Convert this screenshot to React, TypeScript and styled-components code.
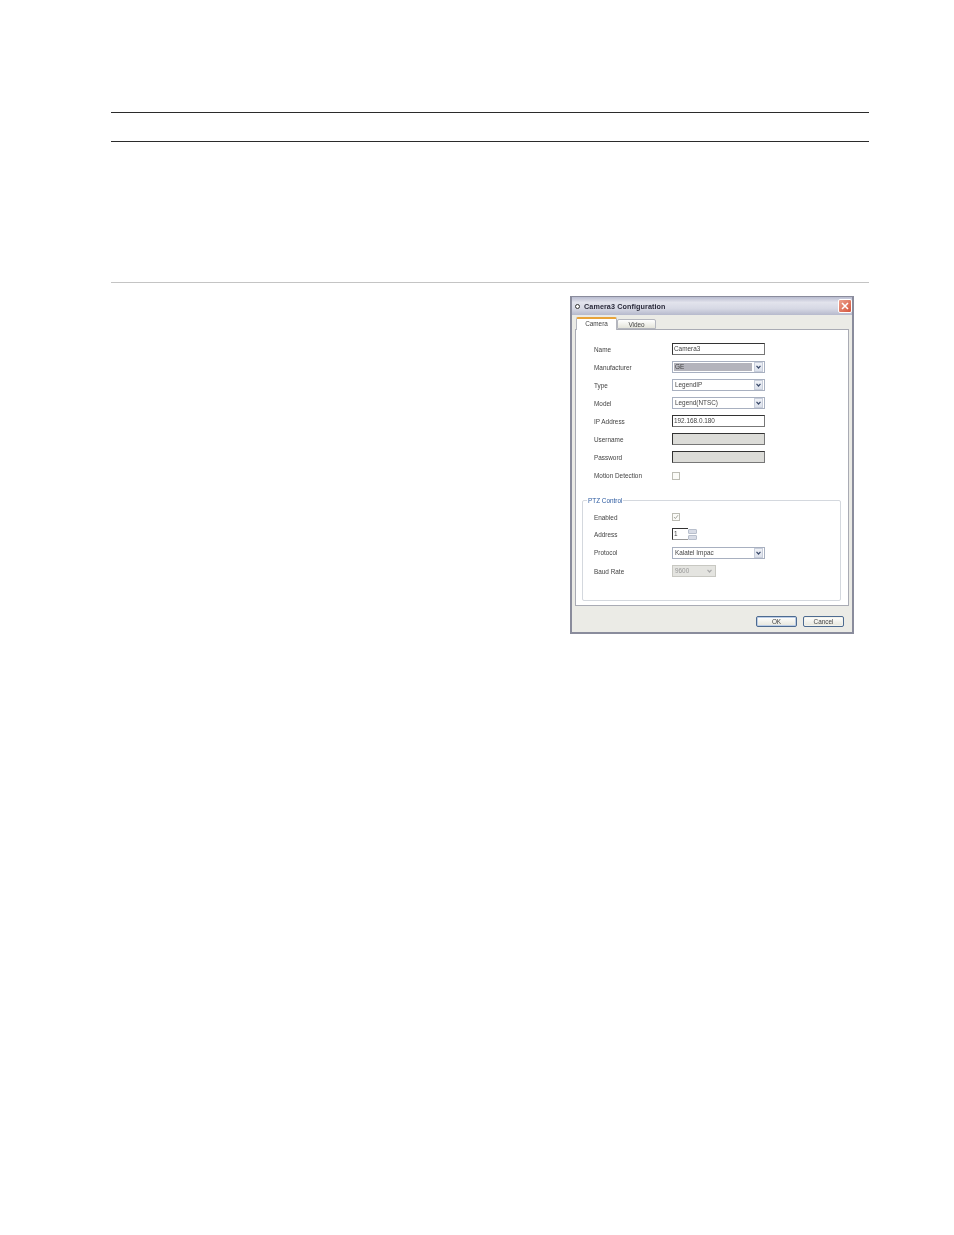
import React from 'react'
import styled, { createGlobalStyle } from 'styled-components'

const GlobalStyle = createGlobalStyle`
  html, body {
    margin: 0;
    background: #fff;
    font-family: "Liberation Sans", Arial, sans-serif;
  }
`

const Page = styled.div`
  width: 954px;
  height: 1235px;
  box-sizing: border-box;
  padding: 112px 85px 0 111px;
  display: flex;
  flex-direction: column;
`

const HeaderBand = styled.div`
  height: 28px;
  border-top: 1px solid #2b2b2b;
  border-bottom: 1px solid #2b2b2b;
`

const IntroSpace = styled.div`
  height: 140px;
  border-bottom: 1px solid #c4c4c4;
`

const Figure = styled.div`
  display: flex;
  justify-content: flex-end;
  padding: 13px 15px 0 0;
`

const Dialog = styled.div`
  width: 284px;
  height: 338px;
  box-sizing: border-box;
  background: #ebebe6;
  border: 2px solid #8a8c9c;
  border-top-width: 1px;
  display: flex;
  flex-direction: column;
  filter: blur(0.3px);
`

const TitleBar = styled.div`
  height: 18px;
  flex: none;
  display: flex;
  align-items: center;
  padding: 0 0 0 3px;
  background: linear-gradient(#b9bcd0 0%, #e2e3ec 30%, #d6d8e4 65%, #b6b9cc 100%);
`

const TitleIcon = styled.span`
  width: 3px;
  height: 3px;
  margin-right: 4px;
  border: 1px solid #333;
  border-radius: 50%;
  background: #fff;
`

const TitleText = styled.span`
  flex: 1;
  font-size: 7.2px;
  font-weight: 700;
  letter-spacing: 0.1px;
  color: #2a2a3a;
`

const CloseButton = styled.span`
  width: 14px;
  height: 14px;
  border-radius: 2px;
  background: linear-gradient(135deg, #eda08c, #d4553c);
  border: 1px solid #fff;
  box-sizing: border-box;
  display: flex;
  align-items: center;
  justify-content: center;
`

const Body = styled.div`
  flex: 1;
  display: flex;
  flex-direction: column;
  padding: 2px 3px 0;
`

const TabRow = styled.div`
  display: flex;
  align-items: flex-end;
  height: 12px;
  padding-left: 1px;
`

const Tab = styled.div<{ $active?: boolean }>`
  box-sizing: border-box;
  height: ${p => (p.$active ? 13 : 10)}px;
  width: ${p => (p.$active ? 41 : 39)}px;
  margin-bottom: ${p => (p.$active ? -1 : 0)}px;
  position: relative;
  background: ${p => (p.$active ? '#fff' : 'linear-gradient(#fff, #e4e4da)')};
  border: 1px solid #b4b6be;
  border-bottom: ${p => (p.$active ? 'none' : '1px solid #b4b6be')};
  border-top: ${p => (p.$active ? '2px solid #e8a33a' : '1px solid #b4b6be')};
  border-radius: 2px 2px 0 0;
  font-size: 6.4px;
  color: #444;
  text-align: center;
  line-height: 9px;
`

const Panel = styled.div`
  width: 274px;
  height: 277px;
  box-sizing: border-box;
  background: #fff;
  border: 1px solid #a9abb4;
  padding: 10px 7px 0 18px;
  display: flex;
  flex-direction: column;
`

const Row = styled.div<{ $height?: number }>`
  height: ${p => p.$height ?? 18}px;
  display: flex;
  align-items: center;
  flex: none;
`

const Label = styled.span`
  width: 78px;
  flex: none;
  font-size: 6.4px;
  color: #444;
`

const TextBox = styled.div<{ $disabled?: boolean }>`
  width: 93px;
  height: 12px;
  box-sizing: border-box;
  border: 1px solid #333;
  border-right-color: #777;
  border-bottom-color: #777;
  background: ${p => (p.$disabled ? '#dcdcd8' : '#fff')};
  padding-left: 1px;
  font-size: 6.4px;
  line-height: 10px;
  color: #444;
`

const ComboBox = styled.div<{ $disabled?: boolean; $width?: number }>`
  width: ${p => p.$width ?? 93}px;
  height: 12px;
  box-sizing: border-box;
  border: 1px solid ${p => (p.$disabled ? '#c8c8c2' : '#a8b0c0')};
  background: ${p => (p.$disabled ? '#e4e4e0' : '#fff')};
  display: flex;
  align-items: center;
  padding: 1px;
`

const ComboValue = styled.span<{ $selected?: boolean; $disabled?: boolean }>`
  flex: 1;
  height: 100%;
  margin-right: 2px;
  padding-left: 1px;
  font-size: 6.4px;
  line-height: 8px;
  color: ${p => (p.$disabled ? '#999' : '#444')};
  background: ${p => (p.$selected ? '#b4b4bc' : 'transparent')};
`

const ComboArrow = styled.span<{ $disabled?: boolean }>`
  width: 9px;
  height: 10px;
  margin: -1px 0;
  flex: none;
  display: flex;
  align-items: center;
  justify-content: center;
  background: ${p => (p.$disabled ? '#e4e4e0' : 'linear-gradient(#f0f2f7, #dce1eb)')};
  border: ${p => (p.$disabled ? 'none' : '1px solid #c8cedb')};
  box-sizing: border-box;
`

const CheckBox = styled.span`
  width: 8px;
  height: 8px;
  box-sizing: border-box;
  border: 1px solid #bcbcb4;
  background: #fbfbf8;
  display: flex;
  align-items: center;
  justify-content: center;
`

const Group = styled.fieldset`
  margin: 12px 0 0 -12px;
  padding: 5px 0 0 11px;
  width: 259px;
  height: 104px;
  box-sizing: border-box;
  border: 1px solid #d4d8de;
  border-radius: 2px;
`

const GroupTitle = styled.legend`
  padding: 0 1px;
  margin-left: -7px;
  font-size: 6.4px;
  line-height: 7px;
  color: #2c5aa0;
`

const SpinBox = styled.div`
  display: flex;
  align-items: center;
`

const SpinValue = styled.div`
  width: 16px;
  height: 12px;
  box-sizing: border-box;
  border: 1px solid #333;
  border-right: none;
  border-bottom-color: #999;
  padding-left: 1px;
  font-size: 6.4px;
  line-height: 10px;
  color: #444;
`

const SpinButtons = styled.div`
  width: 9px;
  height: 11px;
  display: flex;
  flex-direction: column;
  gap: 1px;
`

const SpinButton = styled.span`
  flex: 1;
  background: #d8dce6;
  border: 1px solid #b8bfcc;
  border-radius: 1px;
`

const Footer = styled.div`
  flex: 1;
  display: flex;
  justify-content: flex-end;
  align-items: flex-start;
  gap: 6px;
  padding: 10px 5px 0 0;
`

const DialogButton = styled.div<{ $default?: boolean }>`
  width: 41px;
  height: 11px;
  box-sizing: border-box;
  background: linear-gradient(#fff, #e6e6dc);
  border: 1px solid #4c6a90;
  border-radius: 2px;
  box-shadow: ${p => (p.$default ? 'inset 0 0 0 1px #bccde6' : 'inset 0 0 0 1px #f2f2ec')};
  font-size: 6.4px;
  line-height: 9px;
  text-align: center;
  color: #444;
`

const Chevron = ({ color = '#3a4a6a' }: { color?: string }) => (
  <svg width="5" height="4" viewBox="0 0 5 4">
    <path d="M0.5 0.8 L2.5 3 L4.5 0.8" fill="none" stroke={color} strokeWidth="1.2" />
  </svg>
)

const Combo = ({ value, selected, disabled, width }: { value: string; selected?: boolean; disabled?: boolean; width?: number }) => (
  <ComboBox $disabled={disabled} $width={width}>
    <ComboValue $selected={selected} $disabled={disabled}>{value}</ComboValue>
    <ComboArrow $disabled={disabled}><Chevron color={disabled ? '#aaa' : undefined} /></ComboArrow>
  </ComboBox>
)

const Tick = () => (
  <svg width="6" height="6" viewBox="0 0 6 6">
    <path d="M1 3 L2.4 4.6 L5 1.2" fill="none" stroke="#a8a8a0" strokeWidth="1" />
  </svg>
)

export default function App() {
  return (
    <>
      <GlobalStyle />
      <Page>
        <HeaderBand />
        <IntroSpace />
        <Figure>
          <Dialog>
            <TitleBar>
              <TitleIcon />
              <TitleText>Camera3 Configuration</TitleText>
              <CloseButton>
                <svg width="8" height="8" viewBox="0 0 8 8">
                  <path d="M1 1 L7 7 M7 1 L1 7" stroke="#fff" strokeWidth="1.5" />
                </svg>
              </CloseButton>
            </TitleBar>
            <Body>
              <TabRow>
                <Tab $active>Camera</Tab>
                <Tab>Video</Tab>
              </TabRow>
              <Panel>
                <Row><Label>Name</Label><TextBox>Camera3</TextBox></Row>
                <Row><Label>Manufacturer</Label><Combo value="GE" selected /></Row>
                <Row><Label>Type</Label><Combo value="LegendIP" /></Row>
                <Row><Label>Model</Label><Combo value="Legend(NTSC)" /></Row>
                <Row><Label>IP Address</Label><TextBox>192.168.0.180</TextBox></Row>
                <Row><Label>Username</Label><TextBox $disabled /></Row>
                <Row><Label>Password</Label><TextBox $disabled /></Row>
                <Row $height={19}><Label>Motion Detection</Label><CheckBox /></Row>
                <Group>
                  <GroupTitle>PTZ Control</GroupTitle>
                  <Row $height={16}><Label>Enabled</Label><CheckBox><Tick /></CheckBox></Row>
                  <Row $height={18}>
                    <Label>Address</Label>
                    <SpinBox>
                      <SpinValue>1</SpinValue>
                      <SpinButtons><SpinButton /><SpinButton /></SpinButtons>
                    </SpinBox>
                  </Row>
                  <Row $height={19}><Label>Protocol</Label><Combo value="Kalatel Impac" /></Row>
                  <Row><Label>Baud Rate</Label><Combo value="9600" disabled width={44} /></Row>
                </Group>
              </Panel>
              <Footer>
                <DialogButton $default>OK</DialogButton>
                <DialogButton>Cancel</DialogButton>
              </Footer>
            </Body>
          </Dialog>
        </Figure>
      </Page>
    </>
  )
}
